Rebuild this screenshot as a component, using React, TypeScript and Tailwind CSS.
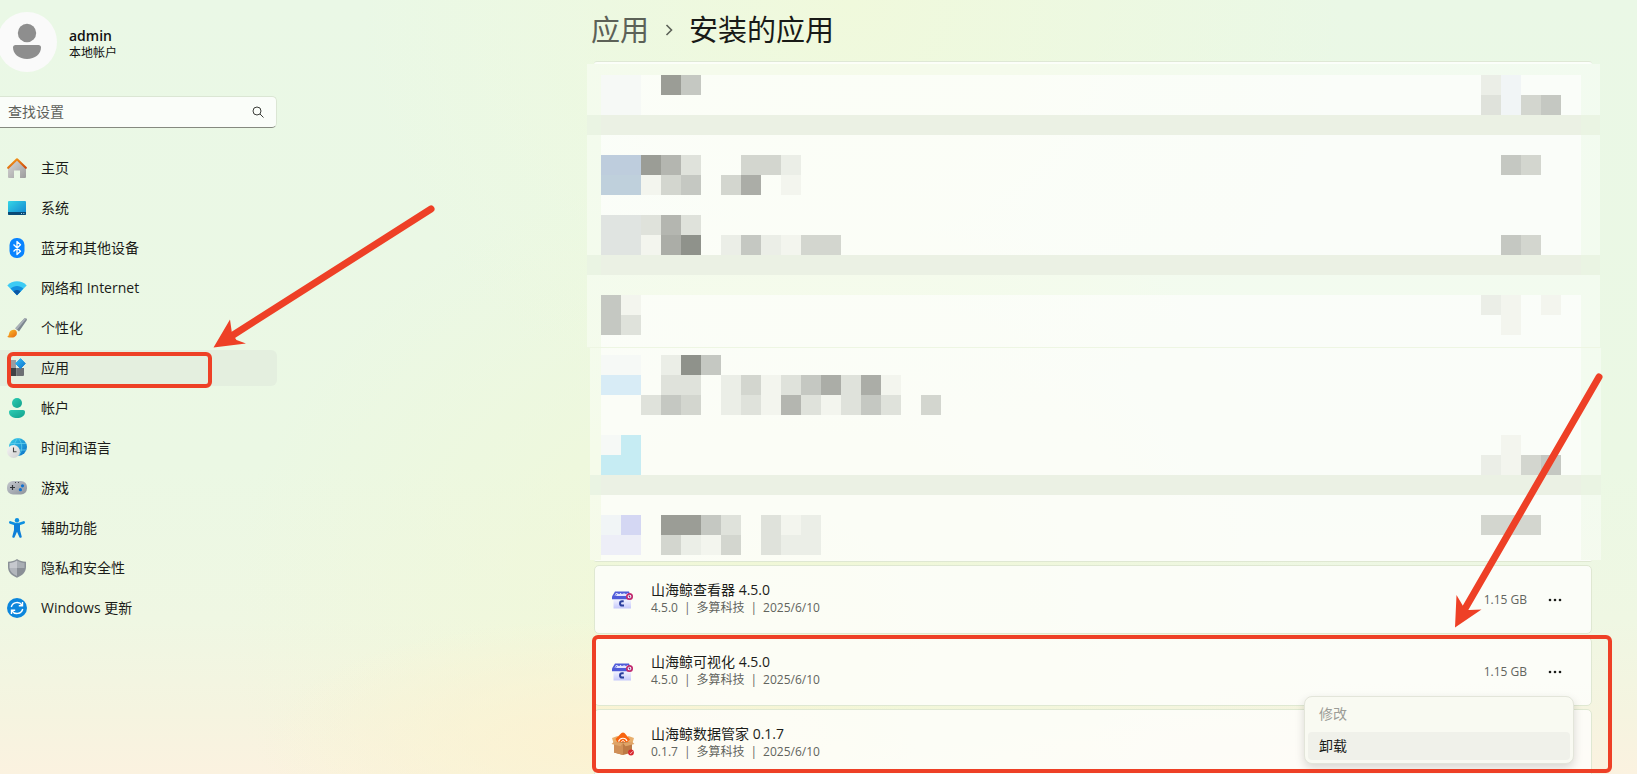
import type { ReactNode } from "react";

type NavItem = {
    label: string;
    icon: ReactNode;
    active?: boolean;
};

type InstalledApp = {
    name: string;
    version: string;
    publisher: string;
    date: string;
    size?: string;
    icon: ReactNode;
};

type MosaicRow = {
    kind?: "band" | "tint";
    left?: string;
    right?: string;
    height?: string;
};

function HomeIcon() {
    return (
        <svg viewBox="0 0 20 20" className="size-5" aria-hidden="true">
            <defs>
                <linearGradient id="home-wall" x1="0" y1="0" x2="1" y2="1">
                    <stop offset="0" stopColor="#d8d8d8" />
                    <stop offset="1" stopColor="#9c9c9c" />
                </linearGradient>
                <linearGradient id="home-roof" x1="0" y1="0" x2="1" y2="1">
                    <stop offset="0" stopColor="#f7a01b" />
                    <stop offset="1" stopColor="#cf4a0c" />
                </linearGradient>
            </defs>
            <path d="M10 2.2 19 10v9a1 1 0 0 1-1 1h-5v-7.5H7V20H2a1 1 0 0 1-1-1v-9z" fill="url(#home-wall)" />
            <path d="M1.2 9.8 10 1.3l8.8 8.5" fill="none" stroke="url(#home-roof)" strokeWidth="2.2" strokeLinecap="round" strokeLinejoin="round" />
        </svg>
    );
}

function SystemIcon() {
    return (
        <svg viewBox="0 0 20 20" className="size-5" aria-hidden="true">
            <defs>
                <linearGradient id="sys" x1="0" y1="0" x2="1" y2="1">
                    <stop offset="0" stopColor="#34d6e6" />
                    <stop offset="1" stopColor="#1181cf" />
                </linearGradient>
            </defs>
            <rect x="1" y="3" width="18" height="14" rx="1" fill="url(#sys)" />
            <path d="M1 14h18v2a1 1 0 0 1-1 1H2a1 1 0 0 1-1-1z" fill="#0a4a76" />
            <path d="M14 15.5h1M16.3 15.5h1" stroke="#a6d5ee" />
        </svg>
    );
}

function BluetoothIcon() {
    return (
        <svg viewBox="0 0 20 20" className="size-5" aria-hidden="true">
            <rect x="2.5" y="0" width="15" height="20" rx="7" fill="#0a84ff" />
            <path d="m6.5 6.5 7 6.8-3.5 3.2v-13l3.5 3.2-7 6.8" fill="none" stroke="#fff" strokeWidth="1.3" strokeLinejoin="round" />
        </svg>
    );
}

function NetworkIcon() {
    return (
        <svg viewBox="0 0 20 20" className="size-5" aria-hidden="true">
            <path d="M.3 7.4C5.4 2 14.6 2 19.7 7.4L10 17.2z" fill="#3ccbf4" />
            <path d="M3.6 10.6c3.5-3.600 9.3-3.600 12.8 0L10 17.2z" fill="#1490df" />
            <path d="M6.4 13.4c2-2 5.2-2 7.2 0L10 17.2z" fill="#0b57a4" />
        </svg>
    );
}

function BrushIcon() {
    return (
        <svg viewBox="0 0 20 20" className="size-5" aria-hidden="true">
            <defs>
                <linearGradient id="brush" x1="0" y1="0" x2="1" y2="1">
                    <stop offset="0" stopColor="#fcc02f" />
                    <stop offset="1" stopColor="#e5660e" />
                </linearGradient>
            </defs>
            <path d="M19.300.4c.7.5.8 1.400.3 2.200L12 13.600 8.300 10.300 17.200.6c.6-.6 1.400-.7 2.100-.2z" fill="#7c868f" />
            <path d="M19.300.4 10 11.800 8.300 10.300 17.200.6c.6-.6 1.400-.7 2.100-.2z" fill="#aab1b8" />
            <path d="M9.500 13.200c1.600 3.700-1.600 6.400-4.600 6.400-2 0-3.700-.2-4.700-.8 1.900-.8 1.500-2.400 2.100-4 .9-2.700 5.300-4.300 7.200-1.600z" fill="url(#brush)" />
        </svg>
    );
}

function AppsIcon() {
    return (
        <svg viewBox="0 0 20 20" className="size-5" aria-hidden="true">
            <defs>
                <linearGradient id="apps" x1="0" y1="0" x2="1" y2="1">
                    <stop offset="0" stopColor="#35bdf2" />
                    <stop offset="1" stopColor="#0c74d0" />
                </linearGradient>
            </defs>
            <path d="M2 2h7v8H2z" fill="#9a9da1" />
            <path d="M2 10h7.500v8H3a1 1 0 0 1-1-1z" fill="#3f4246" />
            <path d="M9.500 10H17v7a1 1 0 0 1-1 1H9.500z" fill="#6c6f74" />
            <path d="m13.500.6 4.800 4.900-4.800 5.100-4.900-5.100z" fill="url(#apps)" stroke="url(#apps)" strokeLinejoin="round" />
        </svg>
    );
}

function AccountIcon() {
    return (
        <svg viewBox="0 0 20 20" className="size-5" aria-hidden="true">
            <defs>
                <linearGradient id="acct" x1="0" y1="0" x2="1" y2="1">
                    <stop offset="0" stopColor="#2ccdb4" />
                    <stop offset="1" stopColor="#12a08b" />
                </linearGradient>
            </defs>
            <circle cx="10" cy="5" r="5" fill="url(#acct)" />
            <path d="M4 12h12c1.200 0 2 .8 2 2 0 4-4 6-8 6s-8-2-8-6c0-1.200.8-2 2-2z" fill="url(#acct)" />
        </svg>
    );
}

function TimeIcon() {
    return (
        <svg viewBox="0 0 20 20" className="size-5" aria-hidden="true">
            <defs>
                <linearGradient id="globe" x1="0" y1="0" x2="1" y2="1">
                    <stop offset="0" stopColor="#38cfe8" />
                    <stop offset="1" stopColor="#0b6fc7" />
                </linearGradient>
                <linearGradient id="clock" x1="0" y1="0" x2="1" y2="1">
                    <stop offset="0" stopColor="#f6f6f6" />
                    <stop offset="1" stopColor="#cfcfcf" />
                </linearGradient>
            </defs>
            <circle cx="11" cy="9" r="9" fill="url(#globe)" />
            <path d="M11 0c-5 5-5 13 0 18M11 0c5 5 5 13 0 18M3 5.500h16M3 12h16" fill="none" stroke="#5fcdec" strokeWidth=".8" />
            <circle cx="6.500" cy="13.500" r="6.500" fill="url(#clock)" />
            <path d="M6.500 9.500v4.300h3" fill="none" stroke="#444" strokeWidth="1.100" />
        </svg>
    );
}

function GameIcon() {
    return (
        <svg viewBox="0 0 20 20" className="size-5" aria-hidden="true">
            <defs>
                <linearGradient id="pad" x1="0" y1="0" x2="1" y2="1">
                    <stop offset="0" stopColor="#c3c7cd" />
                    <stop offset="1" stopColor="#8e949c" />
                </linearGradient>
            </defs>
            <rect x="0" y="3" width="20" height="13.500" rx="6" fill="url(#pad)" />
            <path d="M3 9.500h5M5.500 7v5" stroke="#33373b" strokeWidth="1.200" />
            <path d="M8 4.500h1M11 4.500h1" stroke="#44484c" />
            <circle cx="15.500" cy="7.800" r="1.600" fill="#0f72cf" />
            <circle cx="13.400" cy="11.700" r="1.600" fill="#0f72cf" />
        </svg>
    );
}

function AccessIcon() {
    return (
        <svg viewBox="0 0 20 20" className="size-5" aria-hidden="true">
            <circle cx="10" cy="2.200" r="2.200" fill="#0e8fe0" />
            <path d="M3.300 4.400 8 6h4l4.700-1.600" fill="none" stroke="#0e8fe0" strokeWidth="2.600" strokeLinecap="round" strokeLinejoin="round" />
            <path d="M7 6h6v6l1.700 6.400c.3 1.500-1.900 2.100-2.400.6L10 13.800 7.700 19c-.5 1.500-2.700.9-2.400-.6L7 12z" fill="#0e7fd8" />
        </svg>
    );
}

function ShieldIcon() {
    return (
        <svg viewBox="0 0 20 20" className="size-5" aria-hidden="true">
            <path d="M10 1c2.500 1.800 5.500 2.700 9 2.700V9c0 5-3.500 8.500-9 10.700C4.500 17.500 1 14 1 9V3.700C4.500 3.700 7.500 2.800 10 1z" fill="#8a9097" />
            <path d="M10 2.500c2.300 1.500 4.800 2.200 7.500 2.400V10H10z" fill="#a9aeb4" />
            <path d="M10 2.500C7.700 4 5.200 4.700 2.500 4.900V10H10z" fill="#c6c9ce" />
            <path d="M2.500 10H10v8C5.800 16.200 3 13.600 2.500 10z" fill="#b2b6bc" />
            <path d="M17.500 10H10v8c4.200-1.800 7-4.400 7.500-8z" fill="#8a8f96" />
        </svg>
    );
}

function UpdateIcon() {
    return (
        <svg viewBox="0 0 20 20" className="size-5" aria-hidden="true">
            <circle cx="10" cy="10" r="10" fill="#0c86dc" />
            <path d="M4.300 9A5.900 5.900 0 0 1 15 7.200M15.700 11A5.900 5.900 0 0 1 5 12.800" fill="none" stroke="#fff" strokeWidth="1.400" />
            <path d="M15.500 4v3.700h-3.700M4.500 16v-3.700h3.700" fill="none" stroke="#fff" strokeWidth="1.400" />
        </svg>
    );
}

function ViewerIcon() {
    return (
        <svg viewBox="0 0 24 24" className="size-6" aria-hidden="true">
            <defs>
                <linearGradient id="box" x1="0" y1="0" x2="0" y2="1">
                    <stop offset="0" stopColor="#fbfbff" />
                    <stop offset="1" stopColor="#c5c8fb" />
                </linearGradient>
            </defs>
            <path d="M2.500 10H20v10.500H2.500z" fill="url(#box)" />
            <path d="M4 3.500h14l2 5.500v2.300H1V8.500z" fill="#4f5bd8" />
            <path d="M5 5h12l1 3H3.500z" fill="#e4e6fd" />
            <path d="m4.500 8 1.500-2.500h11" fill="none" stroke="#6a73e0" strokeWidth="1" strokeDasharray="2.500 1" />
            <path d="M12.700 13.300h-1.700c-2.600 0-2.600 4.200 0 4.200h2" fill="none" stroke="#2b3f9e" strokeWidth="2" />
            <circle cx="18.500" cy="8.500" r="2.700" fill="#fff" stroke="#c12a6e" strokeWidth="1.700" />
            <path d="m17.800 7.500 1.400 2" stroke="#6b2c86" strokeWidth="1.300" />
        </svg>
    );
}

function ButlerIcon() {
    return (
        <svg viewBox="0 0 24 24" className="size-6" aria-hidden="true">
            <path d="m1 6 5.500-2L12 10l-9 2.500zM23 6l-5.500-2L12 10l9 2.500z" fill="#e8ae6b" />
            <path d="M10.500 1c1-.8 2-.8 3 0L19 7.500l-3 3H6.500L4.500 7z" fill="#f8640f" />
            <path d="M7.500 9.500c1.500-4 7-4.500 8.500-.5" fill="none" stroke="#fff" strokeWidth="1.200" />
            <path d="M10.500 10c.5-2 2.500-2 3 0" fill="none" stroke="#fff" strokeWidth="1" />
            <path d="M3 10h18v10.500L12 23l-9-2.500z" fill="#bd7a45" />
            <path d="M12 11 3 10v10.500L12 23z" fill="#d08f57" />
            <path d="M3 9.800 12 11l-2.500 3.200L.5 12zM21 9.800 12 11l2.500 3.200 9-2.200z" fill="#dfa468" />
            <circle cx="20" cy="20.500" r="2.900" fill="#d8262f" />
            <path d="m18.800 20.700 1 .9 1.700-2.200" fill="none" stroke="#fff" strokeWidth=".7" />
        </svg>
    );
}

const NAV: NavItem[] = [
    { label: "主页", icon: <HomeIcon /> },
    { label: "系统", icon: <SystemIcon /> },
    { label: "蓝牙和其他设备", icon: <BluetoothIcon /> },
    { label: "网络和 Internet", icon: <NetworkIcon /> },
    { label: "个性化", icon: <BrushIcon /> },
    { label: "应用", icon: <AppsIcon />, active: true },
    { label: "帐户", icon: <AccountIcon /> },
    { label: "时间和语言", icon: <TimeIcon /> },
    { label: "游戏", icon: <GameIcon /> },
    { label: "辅助功能", icon: <AccessIcon /> },
    { label: "隐私和安全性", icon: <ShieldIcon /> },
    { label: "Windows 更新", icon: <UpdateIcon /> },
];

const APPS: InstalledApp[] = [
    { name: "山海鲸查看器 4.5.0", version: "4.5.0", publisher: "多算科技", date: "2025/6/10", size: "1.15 GB", icon: <ViewerIcon /> },
    { name: "山海鲸可视化 4.5.0", version: "4.5.0", publisher: "多算科技", date: "2025/6/10", size: "1.15 GB", icon: <ViewerIcon /> },
    { name: "山海鲸数据管家 0.1.7", version: "0.1.7", publisher: "多算科技", date: "2025/6/10", icon: <ButlerIcon /> },
];

// Digits are greys from light to dark, letters are tinted cells.
const CELL: Record<string, string> = {
    "1": "bg-[#f3f5ee]",
    "2": "bg-[#ebeee7]",
    "3": "bg-[#dfe2db]",
    "4": "bg-[#d3d6cf]",
    "5": "bg-[#c5c8c2]",
    "6": "bg-[#b4b6b0]",
    "7": "bg-[#abada7]",
    "8": "bg-[#9b9d96]",
    "9": "bg-[#8f928b]",
    a: "bg-[#becddd]",
    b: "bg-[#bfd0dc]",
    c: "bg-[#d8ecf6]",
    d: "bg-[#c6ecf3]",
    e: "bg-[#d4d7f3]",
    f: "bg-[#edeef7]",
    g: "bg-[#f1f5f6]",
    h: "bg-[#e0e4e1]",
    i: "bg-[#f6f9f6]",
};

const UPPER: MosaicRow[] = [
    { kind: "tint", height: "h-[11px]" },
    { left: "ii.85", right: "2g..." },
    { left: "ii", right: "3g45." },
    { kind: "band" },
    {},
    { left: "aa863..442", right: "54.." },
    { left: "bb145.47.1" },
    {},
    { left: "hh363" },
    { left: "hh179.252144", right: "54.." },
    { kind: "band" },
    { kind: "tint" },
    { left: "51", right: "21.1." },
    { left: "53", right: "1..." },
    { height: "h-3" },
];

const LOWER: MosaicRow[] = [
    { height: "h-[7px]" },
    { left: "ii.295" },
    { left: "cc.33.241357371" },
    { left: "..354.231631353.4" },
    {},
    { left: "id", right: "1..." },
    { left: "dd", right: "2145." },
    { kind: "band" },
    {},
    { left: "ge.8853.312", right: "444.." },
    { left: "ff.4214.322" },
    { height: "h-[5px]" },
];

function Cells({ code }: { code: string }) {
    return (
        <div className="flex">
            {code.split("").map((c, i) => (
                <span key={i} className={`w-5 ${CELL[c] ?? ""}`} />
            ))}
        </div>
    );
}

type MosaicProps = {
    rows: MosaicRow[];
    leftEdge: string;
    rightEdge: string;
    className: string;
};

function Mosaic({ rows, leftEdge, rightEdge, className }: MosaicProps) {
    return (
        <div className={className} aria-hidden="true">
            {rows.map((row, i) => {
                const side = row.kind === "band" ? "bg-[#eaf4e3]" : "bg-white/40";
                const body =
                    row.kind === "band"
                        ? "bg-[#ebf1e4]"
                        : row.kind === "tint"
                          ? "bg-white/40"
                          : "bg-white/75";
                return (
                    <div key={i} className={`flex ${row.height ?? "h-5"}`}>
                        <div className={`${leftEdge} ${side}`} />
                        <div className={`flex flex-1 justify-between ${body}`}>
                            <Cells code={row.left ?? ""} />
                            <Cells code={row.right ?? ""} />
                        </div>
                        <div className={`${rightEdge} ${side}`} />
                    </div>
                );
            })}
        </div>
    );
}

function AppCard({ app, children }: { app: InstalledApp; children?: ReactNode }) {
    return (
        <li className="relative flex min-h-[69px] items-center rounded-[5px] border border-[#dfe8d2] bg-white/75 pr-5 pl-4">
            {app.icon}
            <div className="ml-4 flex-1 pb-0.5">
                <div className="text-sm leading-[18px] text-[#1b1c19]">{app.name}</div>
                <div className="flex gap-1.5 text-xs leading-[18px] text-[#62645e]">
                    <span>{app.version}</span>
                    <span>|</span>
                    <span>{app.publisher}</span>
                    <span>|</span>
                    <span>{app.date}</span>
                </div>
            </div>
            {app.size && (
                <>
                    <span className="text-xs text-[#62645e]">{app.size}</span>
                    <button type="button" aria-label="更多选项" className="ml-3 flex h-8 w-8 items-center justify-center">
                        <svg viewBox="0 0 14 4" className="h-1 w-3.5" fill="#1b1c19" aria-hidden="true">
                            <circle cx="2" cy="2" r="1.300" />
                            <circle cx="7" cy="2" r="1.300" />
                            <circle cx="12" cy="2" r="1.300" />
                        </svg>
                    </button>
                </>
            )}
            {children}
        </li>
    );
}

function Sidebar() {
    return (
        <aside className="w-[277px] shrink-0 pt-3">
            <div className="-ml-[3px] flex items-center">
                <svg viewBox="0 0 60 60" className="size-[60px]" aria-hidden="true">
                    <circle cx="30" cy="30" r="30" fill="#fafafa" />
                    <circle cx="30" cy="21" r="9.200" fill="#8e8e8e" />
                    <path d="M18.500 33h23c1.500 0 2.500 1 2.500 2.500C44 42 38 47 30 47s-14-5-14-11.500c0-1.500 1-2.500 2.500-2.500z" fill="#8e8e8e" />
                </svg>
                <div className="ml-3 pt-1">
                    <div className="text-sm leading-[18px] font-semibold text-[#111]">admin</div>
                    <div className="text-xs leading-4 text-[#111]">本地帐户</div>
                </div>
            </div>

            <label className="mt-6 flex h-8 items-center rounded-r-[5px] border border-l-0 border-[#dbe6d4] border-b-[#85897f] bg-white/75 pr-3 pl-2">
                <input
                    type="text"
                    placeholder="查找设置"
                    aria-label="查找设置"
                    className="min-w-0 flex-1 bg-transparent text-sm outline-none placeholder:text-[#5e615b]"
                />
                <svg viewBox="0 0 12 12" className="size-3" fill="none" stroke="#3c3e3a" aria-hidden="true">
                    <circle cx="5" cy="5" r="4" />
                    <path d="m8 8 3.500 3.500" />
                </svg>
            </label>

            <nav className="mt-[22px] flex flex-col gap-1">
                {NAV.map((item) => (
                    <a
                        key={item.label}
                        href="#"
                        className={`relative flex h-9 items-center gap-3.5 rounded-r-md pl-[7px] text-sm text-[#1b1c19] ${item.active ? "bg-[#e4efdf]" : ""}`}
                    >
                        {item.icon}
                        {item.label}
                        {item.active && (
                            <span className="absolute top-0.5 left-[7px] h-9 w-[205px] rounded-md border-4 border-[#ee4026]" />
                        )}
                    </a>
                ))}
            </nav>
        </aside>
    );
}

export default function App() {
    return (
        <div className="relative flex h-screen overflow-hidden bg-[radial-gradient(ellipse_20%_16%_at_36%_96%,#fcf2d2_0%,transparent_100%),radial-gradient(ellipse_30%_60%_at_52%_0%,#f0f9dc_0%,transparent_100%),radial-gradient(ellipse_34%_60%_at_48%_80%,#f1f8d6_0%,transparent_100%),linear-gradient(180deg,#eaf8e6_0%,#ebf8e4_60%,#eff7e3_80%,#f5f4e0_92%,#fbf2e0_100%)] font-['Open_Sans','Noto_Sans_CJK_SC',sans-serif]">
            <Sidebar />

            <main className="mr-[45px] ml-[317px] min-w-0 flex-1 pt-2.5">
                <h1 className="-ml-[3px] flex h-10 items-center text-[29px]">
                    <a href="#" className="text-[#5c6157]">
                        应用
                    </a>
                    <svg viewBox="0 0 8 12" className="mx-4 h-3 w-2" fill="none" stroke="#5c6157" strokeWidth="1.600" aria-hidden="true">
                        <path d="m1.500 1 5 5-5 5" />
                    </svg>
                    <span className="text-[#191a17]">安装的应用</span>
                </h1>

                <div className="mt-[11px] h-[3px] rounded-t-[4px] border-t border-[#dfe8d6] bg-white/80" />
                <Mosaic rows={UPPER} leftEdge="w-3.5" rightEdge="w-[19px]" className="-mr-2 -ml-[7px] border-b border-[#eef6e3]" />
                <Mosaic rows={LOWER} leftEdge="w-[11px]" rightEdge="w-5" className="-mr-[9px] -ml-1" />
                <div className="h-0.5 rounded-b-[4px] border-b border-[#dfe8d2] bg-white/75" />

                <ul className="mt-[3px] flex flex-col gap-[3px]">
                    <AppCard app={APPS[0]} />
                    <AppCard app={APPS[1]}>
                        <div
                            role="menu"
                            className="absolute top-[58px] right-[17px] z-10 w-[270px] rounded-lg border border-[#e3e5da] bg-[#f9faf2] p-[3px] shadow-[0_4px_10px_rgba(0,0,0,0.15)]"
                        >
                            <button type="button" role="menuitem" disabled className="mb-1 block h-7 w-full px-[11px] text-left text-sm text-[#9c9d97]">
                                修改
                            </button>
                            <button type="button" role="menuitem" className="block h-7 w-full rounded-[4px] bg-[#f0f1ea] px-[11px] text-left text-sm text-[#1b1c19]">
                                卸载
                            </button>
                        </div>
                        <span className="pointer-events-none absolute -top-[3px] -right-[21px] -left-[3px] z-20 h-[138px] rounded-md border-4 border-[#ee4026]" />
                    </AppCard>
                    <AppCard app={APPS[2]} />
                </ul>
            </main>

            <svg className="pointer-events-none absolute top-0 left-0 z-30 h-[774px] w-[1637px]" viewBox="0 0 1637 774" fill="#ee4026" aria-hidden="true">
                <path d="M431 209 230 337" stroke="#ee4026" strokeWidth="7" strokeLinecap="round" />
                <path d="m213.500 347.500 16.500-28 2 14 4.500 6.500 9.500 3.500z" />
                <path d="M1599 377 1466 607" stroke="#ee4026" strokeWidth="7" strokeLinecap="round" />
                <path d="m1455 627.500 1.500-32.500 6.500 11 6 4 12.500-.5z" />
            </svg>
        </div>
    );
}
